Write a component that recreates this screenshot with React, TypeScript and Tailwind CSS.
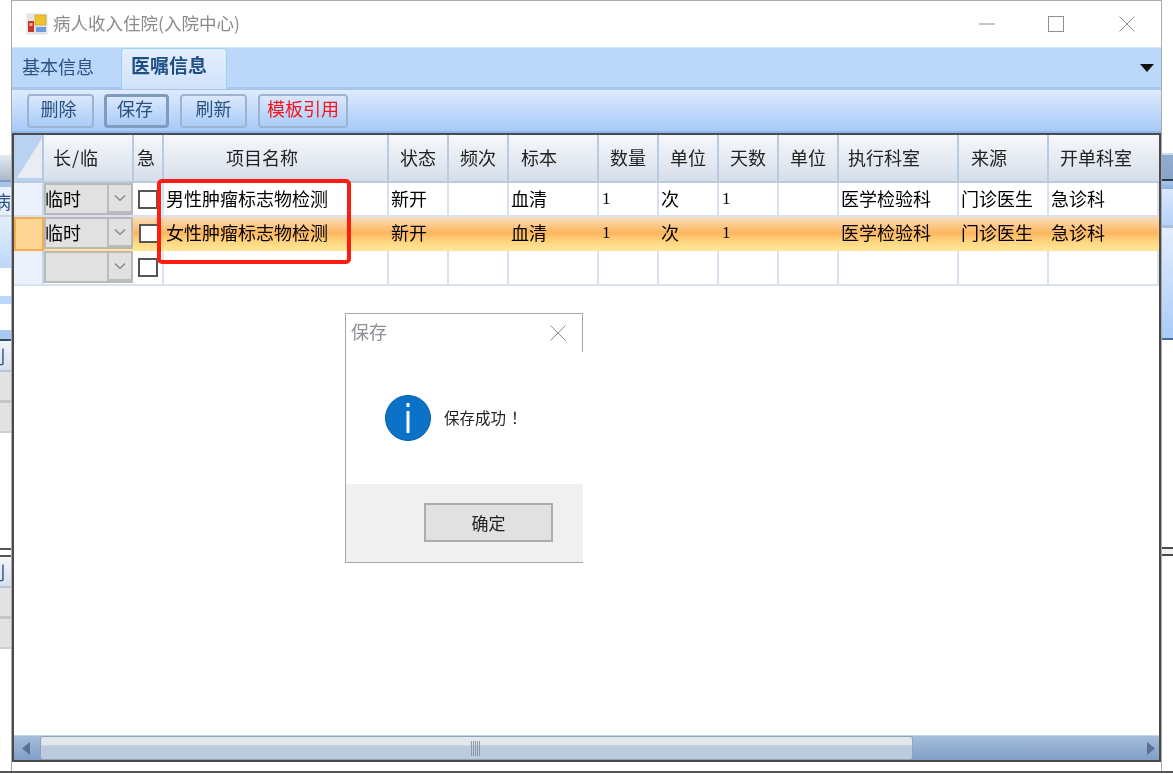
import React from "react";

const font = { fontFamily: '"Noto Sans CJK SC", "Liberation Sans", sans-serif' };

const cols = "grid grid-cols-[30px_90px_30px_225px_60px_60px_90px_60px_60px_60px_60px_120px_90px_110px]";

function ToolBtn({ label, w, pressed, red, cls }: { label: string; w: string; pressed?: boolean; red?: boolean; cls?: string }) {
  return (
    <div
      className={`${w} h-[34px] flex items-center justify-center rounded-[4px] bg-gradient-to-b from-[#dbe8fc] to-[#a9ccf8] text-[18px] leading-none pb-[5px] ${
        pressed ? "border-[3px] border-[#7f9cbe]" : "border-2 border-[#9db4d0]"
      } ${red ? "text-[#f5141c]" : "text-[#2a5180]"} ${cls ?? ""}`}
    >
      {label}
    </div>
  );
}

function Combo({ text }: { text: string }) {
  return (
    <div className="h-[32px] w-[89px] flex bg-[#e1e1e1] border-2 border-[#b9b9b9] text-[18px] leading-none text-black">
      <div className="flex-1 flex items-center -ml-[1px] pb-[2px]">{text}</div>
      <div className="w-[24px] h-[28px] border-l-2 border-b-2 border-[#bcbcbc] flex items-center justify-center">
        <svg width="12" height="8" viewBox="0 0 12 8" fill="none" stroke="#7a8088" strokeWidth="1.2">
          <path d="M1 1.5 L6 6.5 L11 1.5" />
        </svg>
      </div>
    </div>
  );
}

const headers: [string, string][] = [
  ["长/临", "justify-start pl-[9px] tracking-[1px]"],
  ["急", "justify-center pr-[4px]"],
  ["项目名称", "justify-start pl-[62px]"],
  ["状态", "justify-start pl-[11px]"],
  ["频次", "justify-start pl-[11px]"],
  ["标本", "justify-start pl-[12px]"],
  ["数量", "justify-start pl-[11px]"],
  ["单位", "justify-start pl-[11px]"],
  ["天数", "justify-start pl-[11px]"],
  ["单位", "justify-start pl-[11px]"],
  ["执行科室", "justify-start pl-[9px]"],
  ["来源", "justify-start pl-[12px]"],
  ["开单科室", "justify-start pl-[11px]"],
];

const rowData = [
  ["男性肿瘤标志物检测", "新开", "", "血清", "1", "次", "1", "", "医学检验科", "门诊医生", "急诊科"],
  ["女性肿瘤标志物检测", "新开", "", "血清", "1", "次", "1", "", "医学检验科", "门诊医生", "急诊科"],
  ["", "", "", "", "", "", "", "", "", "", ""],
];

function Row({ data, selected, combo, h }: { data: string[]; selected?: boolean; combo: string; h: string }) {
  const sep = selected ? "" : "border-r-2 border-[#d8e1ee]";
  return (
    <div
      className={`${cols} ${h} border-b-2 ${
        selected
          ? "border-[#ffe594] bg-[linear-gradient(to_bottom,#f6dcc0_0%,#fccb8d_25%,#fdb55f_50%,#ffd07a_72%,#ffe594_100%)]"
          : "border-[#d8e1ee] bg-white"
      }`}
    >
      <div
        className={
          selected
            ? "bg-[#fdd594] border-2 border-[#f7ab52] -mb-[2px]"
            : "bg-[#ebf1fb] border-r-2 border-[#c5d6ec]"
        }
      />
      <div className={selected ? "" : "bg-white"}>
        <Combo text={combo} />
      </div>
      <div className={`${sep} flex justify-center pt-[7px] pr-[1px]`}>
        <div className="w-[20px] h-[19px] bg-white border-2 border-[#555555]" />
      </div>
      {data.map((c, i) => (
        <div
          key={i}
          className={`${sep} flex items-center pb-[2px] text-black whitespace-nowrap leading-none ${
            c === "1" ? "text-[17px] pl-[3px]" : "text-[18px] pl-[2px]"
          }`}
          style={c === "1" ? { fontFamily: '"Liberation Serif", serif' } : undefined}
        >
          {c}
        </div>
      ))}
    </div>
  );
}

function Side({ parts }: { parts: { h: string; c: string; t?: string }[] }) {
  return (
    <div className="w-[11px] shrink-0 flex flex-col overflow-hidden">
      {parts.map((p, i) => (
        <div
          key={i}
          className={`${p.h} ${p.c} shrink-0 flex items-center justify-end whitespace-nowrap text-[18px] leading-none text-[#2a5180]`}
        >
          {p.t}
        </div>
      ))}
    </div>
  );
}

const cutLabel = "pr-[6px] text-[#1f2a3a]";

export default function App() {
  return (
    <div className="relative w-[1173px] h-[774px] overflow-hidden bg-white blur-[0.35px]" style={font}>
      <div className="flex h-[771px]">
        <Side
          parts={[
            { h: "h-[155px]", c: "bg-white" },
            { h: "h-[25px]", c: "bg-gradient-to-b from-[#e6eaf0] to-[#a9b9cc]" },
            { h: "h-[2px]", c: "bg-[#7f9cc4]" },
            { h: "h-[5px]", c: "bg-[#a6c4ec]" },
            { h: "h-[28px]", c: "bg-[#eaf2fd]", t: "病" },
            { h: "h-[2px]", c: "bg-[#c9d6e6]" },
            { h: "h-[51px]", c: "bg-gradient-to-b from-[#e3eefc] to-[#bcd7f9]" },
            { h: "h-[28px]", c: "bg-white" },
            { h: "h-[8px]", c: "bg-[#bdd7fa]" },
            { h: "h-[26px]", c: "bg-white" },
            { h: "h-[9px]", c: "bg-[#a9c9f5]" },
            { h: "h-[2px]", c: "bg-[#3c4a5c]" },
            { h: "h-[29px]", c: `bg-gradient-to-b from-[#f3f6fa] to-[#d6dfe9] ${cutLabel}`, t: "列" },
            { h: "h-[2px]", c: "bg-[#b7c6d8]" },
            { h: "h-[28px]", c: "bg-[#e2e2e2]" },
            { h: "h-[3px]", c: "bg-[#c4c8cc]" },
            { h: "h-[28px]", c: "bg-[#e2e2e2]" },
            { h: "h-[2px]", c: "bg-[#c9d0d8]" },
            { h: "h-[115px]", c: "bg-white" },
            { h: "h-[2px]", c: "bg-[#555555]" },
            { h: "h-[5px]", c: "bg-white" },
            { h: "h-[2px]", c: "bg-[#555555]" },
            { h: "h-[29px]", c: `bg-gradient-to-b from-[#f3f6fa] to-[#d6dfe9] ${cutLabel}`, t: "列" },
            { h: "h-[2px]", c: "bg-[#b7c6d8]" },
            { h: "h-[28px]", c: "bg-[#e2e2e2]" },
            { h: "h-[3px]", c: "bg-[#c4c8cc]" },
            { h: "h-[28px]", c: "bg-[#e2e2e2]" },
            { h: "h-[2px]", c: "bg-[#c9d0d8]" },
          ]}
        />

        {/* main window */}
        <div className="w-[1151px] shrink-0 flex flex-col bg-white border-x border-[#ababab] border-t">
          {/* title bar */}
          <div className="h-[46px] shrink-0 flex items-center pl-[14px] bg-white">
            <svg width="22" height="22" viewBox="0 0 22 22" className="mr-[5px]">
              <rect x="0.5" y="0.5" width="21" height="21" fill="#e4e4e4" />
              <rect x="2" y="8" width="6" height="11" fill="#c8362c" />
              <rect x="3.5" y="10" width="3" height="3" fill="#f3b0a0" />
              <rect x="9" y="2" width="11" height="10" fill="#f0c230" stroke="#c89a20" strokeWidth="0.6" />
              <rect x="10" y="14" width="10" height="5" fill="#6f9be0" />
            </svg>
            <span className="text-[17.5px] leading-none text-[#8b8b8b] pb-[3px]">病人收入住院(入院中心)</span>
            <div className="ml-auto flex items-center pr-[26px]">
              <svg width="16" height="2" viewBox="0 0 16 2" className="mr-[53px]">
                <path d="M0 1H16" stroke="#8e8e8e" strokeWidth="1" />
              </svg>
              <svg width="16" height="16" viewBox="0 0 16 16" className="mr-[55px]">
                <rect x="0.5" y="0.5" width="15" height="15" fill="none" stroke="#8e8e8e" />
              </svg>
              <svg width="16" height="16" viewBox="0 0 16 16">
                <path d="M0.5 0.5 L15.5 15.5 M15.5 0.5 L0.5 15.5" stroke="#8e8e8e" strokeWidth="1" />
              </svg>
            </div>
          </div>

          {/* tab strip */}
          <div className="h-[42px] shrink-0 flex items-end bg-[#bbd8fb] border-t border-[#d3e4fb] border-b-2 border-b-[#a3c8f3] text-[18px] leading-none">
            <div className="w-[109px] h-full flex items-center pl-[10px] pb-[3px] text-[#2a5180]">基本信息</div>
            <div className="w-[106px] h-[41px] -mb-[2px] flex items-start justify-start pl-[9px] pt-[6px] text-[19px] font-bold text-[#1f4e86] rounded-t-[4px] border-x border-t border-[#9fd0f0] bg-gradient-to-b from-[#e4effd] to-[#d0e2fb]">
              医嘱信息
            </div>
            <div className="ml-auto self-center mr-[7px]">
              <svg width="14" height="8" viewBox="0 0 14 8">
                <path d="M0 0H14L7 8Z" fill="#111" />
              </svg>
            </div>
          </div>

          {/* toolbar */}
          <div className="h-[44px] shrink-0 flex items-center gap-[10px] pl-[15px] bg-gradient-to-b from-[#dfeafd] to-[#a6caf9] border-t border-[#a8c4e8] border-b-2 border-b-[#8fb7ee]">
            <ToolBtn label="删除" w="w-[67px]" cls="pr-[4px]" />
            <ToolBtn label="保存" w="w-[65px]" pressed cls="pr-[3px]" />
            <ToolBtn label="刷新" w="w-[67px]" cls="ml-[1px]" />
            <ToolBtn label="模板引用" w="w-[90px]" red cls="ml-[1px]" />
          </div>

          {/* data grid */}
          <div className="h-[629px] shrink-0 flex flex-col border-2 border-[#4a4a4a] bg-white">
            <div className={`${cols} h-[48px] shrink-0 border-b-2 border-[#b9cbe0] bg-gradient-to-b from-[#f6f8fb] to-[#d6deea] text-[18px] leading-none text-[#222222]`}>
              <div className="relative bg-[#b9d2ef] border-r-2 border-[#b3c8e0] p-[3px]">
                <svg width="25" height="40" viewBox="0 0 25 40" preserveAspectRatio="none">
                  <path d="M25 0V40H0Z" fill="#e9edf3" />
                </svg>
              </div>
              {headers.map(([h, c], i) => (
                <div key={i} className={`flex items-center pb-[3px] border-r-2 border-[#b9cbe0] last:border-r-0 ${c}`}>
                  {h}
                </div>
              ))}
            </div>
            <Row data={rowData[0]} combo="临时" h="h-[34px]" />
            <Row data={rowData[1]} combo="临时" selected h="h-[34px]" />
            <Row data={rowData[2]} combo="" h="h-[35px]" />
            <div className="flex-1" />

            {/* horizontal scrollbar */}
            <div className="h-[25px] shrink-0 flex items-stretch bg-gradient-to-b from-[#a5bddb] to-[#7f9fc8] border-t border-[#c5d6ec]">
              <div className="w-[26px] flex items-center justify-center pr-[2px]">
                <svg width="8" height="13" viewBox="0 0 8 13">
                  <path d="M8 0V13L0 6.5Z" fill="#5a6f94" />
                </svg>
              </div>
              <div className="w-[873px] flex items-center justify-center rounded-[3px] border border-[#8fa2bb] bg-[linear-gradient(to_bottom,#e3e7ec_0%,#e3e7ec_35%,#bccbdd_40%,#bccbdd_100%)]">
                <div className="flex gap-[1px] h-[15px] ml-[-2px]">
                  {[0, 1, 2, 3, 4].map((i) => (
                    <div key={i} className="w-[1px] h-full bg-[#8c98a8]" />
                  ))}
                </div>
              </div>
              <div className="flex-1 flex items-center justify-end pr-[4px]">
                <svg width="8" height="13" viewBox="0 0 8 13">
                  <path d="M0 0V13L8 6.5Z" fill="#5a6f94" />
                </svg>
              </div>
            </div>
          </div>
        </div>

        <Side
          parts={[
            { h: "h-[153px]", c: "bg-white" },
            { h: "h-[2px]", c: "bg-[#c9dcf7]" },
            { h: "h-[24px]", c: "bg-gradient-to-b from-[#92acd0] to-[#87a3c8]" },
            { h: "h-[2px]", c: "bg-[#2c3a4c]" },
            { h: "h-[8px]", c: "bg-gradient-to-b from-[#a9c8f0] to-[#8fb0dc]" },
            { h: "h-[36px]", c: "bg-gradient-to-b from-[#dbe8fc] to-[#b4d2fa]" },
            { h: "h-[3px]", c: "bg-[#a9bfdc]" },
            { h: "h-[110px]", c: "bg-gradient-to-b from-[#e4eefd] to-[#a9cbf8]" },
            { h: "h-[2px]", c: "bg-[#4b6a94]" },
            { h: "h-[207px]", c: "bg-white" },
            { h: "h-[2px]", c: "bg-[#4a4a4a]" },
            { h: "h-[5px]", c: "bg-[#f0f0f0]" },
            { h: "h-[2px]", c: "bg-[#4a4a4a]" },
          ]}
        />
      </div>

      <div className="h-[2px] bg-[#555555]" />

      {/* red annotation */}
      <div className="absolute left-[157px] top-[179px] w-[194px] h-[85px] border-[4px] border-[#fb1d12] rounded-[5px]" />

      {/* message dialog */}
      <div className="absolute left-[345px] top-[313px] w-[238px] h-[250px] flex flex-col bg-white border-l border-t border-b border-[#a6a6a6]">
        <div className="absolute right-0 top-0 w-[1px] h-[38px] bg-[#a6a6a6]" />
        <div className="h-[37px] shrink-0 flex items-center pl-[5px] pr-[17px] justify-between">
          <span className="text-[18px] leading-none text-[#8b8f94] pb-[3px]">保存</span>
          <svg width="16" height="16" viewBox="0 0 16 16">
            <path d="M0.5 0.5 L15.5 15.5 M15.5 0.5 L0.5 15.5" stroke="#8e8e8e" strokeWidth="1" />
          </svg>
        </div>
        <div className="h-[133px] shrink-0 flex items-center pl-[39px] gap-[13px]">
          <div className="w-[46px] h-[46px] rounded-full bg-[#0b72c9] border border-[#0a5da6] flex items-center justify-center">
            <svg width="6" height="30" viewBox="0 0 6 30">
              <rect x="1.5" y="0" width="3" height="4" fill="#fff" />
              <rect x="1.5" y="8" width="3" height="22" fill="#fff" />
            </svg>
          </div>
          <span className="text-[15.5px] leading-none text-[#222222] whitespace-nowrap">
            保存成功<span className="ml-[5px]">！</span>
          </span>
        </div>
        <div className="flex-1 bg-[#f0f0f0] pl-[78px] pt-[19px]">
          <div className="w-[129px] h-[39px] flex items-center justify-center bg-[#e1e1e1] border-2 border-[#adadad] text-[17px] leading-none text-[#222222]">
            确定
          </div>
        </div>
      </div>
    </div>
  );
}
